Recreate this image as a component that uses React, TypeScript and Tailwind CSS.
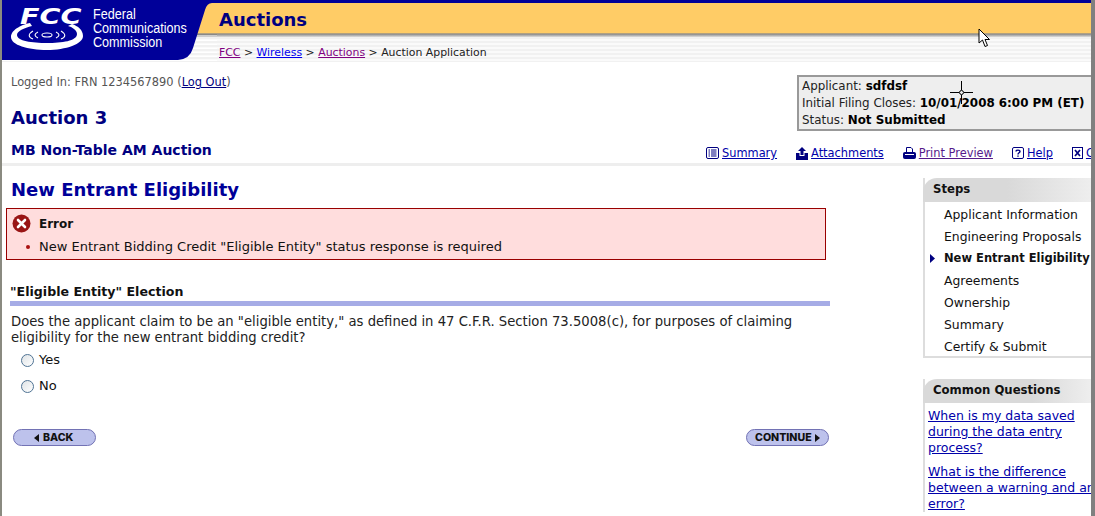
import React from 'react';

const verdana = { fontFamily: '"DejaVu Sans", Verdana, sans-serif' };

const stripes =
  'bg-[repeating-linear-gradient(180deg,#f1f1f1_0px,#f1f1f1_2px,#fafafa_2px,#fafafa_4px)]';

const steps = [
  'Applicant Information',
  'Engineering Proposals',
  'New Entrant Eligibility',
  'Agreements',
  'Ownership',
  'Summary',
  'Certify & Submit',
];

const SummaryIcon = () => (
  <svg width="13" height="12" viewBox="0 0 13 12" fill="none" stroke="#000080">
    <rect x="0.5" y="0.5" width="12" height="11" rx="1.5" />
    <path d="M2.5 3H4M5 3H10.5M2.5 5H4M5 5H10.5M2.5 7H4M5 7H10.5M2.5 9H4M5 9H10.5" />
  </svg>
);

const AttachIcon = () => (
  <svg width="12" height="13" viewBox="0 0 12 13" fill="#000080">
    <path d="M6 0L10 4H7.5V8H4.5V4H2Z" />
    <path d="M0 6H3.5V9H8.5V6H12V13H0Z" />
  </svg>
);

const PrintIcon = () => (
  <svg width="13" height="12" viewBox="0 0 13 12" fill="none" stroke="#000080">
    <path d="M3.5 6V0.5H8L9.5 2V6" />
    <rect x="0.5" y="5.5" width="12" height="6" rx="1" fill="#000080" />
    <path d="M2 7.5H11" stroke="#ffffff" />
  </svg>
);

const HelpIcon = () => (
  <svg width="12" height="12" viewBox="0 0 12 12" fill="none" stroke="#000080">
    <rect x="0.5" y="0.5" width="11" height="11" rx="1.5" />
    <path d="M4 4.5C4 2.6 8 2.6 8 4.5C8 5.8 6 5.8 6 7.4M6 8.5V9.8" strokeWidth="1.4" />
  </svg>
);

const CloseIcon = () => (
  <svg width="11" height="12" viewBox="0 0 11 12" fill="none" stroke="#000080">
    <rect x="0.5" y="0.5" width="10" height="11" />
    <path d="M3 3L8 9M8 3L3 9" strokeWidth="1.7" />
  </svg>
);

const Tool = ({ icon, label, visited }: { icon: React.ReactNode; label: string; visited?: boolean }) => (
  <span className="flex items-center gap-[3px] shrink-0">
    {icon}
    <a className={`underline ${visited ? 'text-[#551a8b]' : 'text-[#0000aa]'}`}>{label}</a>
  </span>
);

const Radio = ({ label }: { label: string }) => (
  <label className="flex items-center gap-[5px] h-[14px] text-[13px] text-[#111]">
    <input
      type="radio"
      name="eligible"
      className="appearance-none w-[13px] h-[13px] rounded-full border border-[#4f7394] bg-[linear-gradient(135deg,#dfe3e6,#ffffff)]"
    />
    {label}
  </label>
);

const PillButton = ({ children, className }: { children: React.ReactNode; className: string }) => (
  <button
    className={`h-[17px] w-[83px] flex items-center rounded-full border border-[#7272b4] bg-[#bdc2ec] text-[10.6px] font-extrabold text-[#111] ${className}`}
    style={{ fontFamily: 'Inter, sans-serif' }}
  >
    {children}
  </button>
);

function Logo() {
  return (
    <div className="relative w-[215px] h-[62px] shrink-0">
      <svg width="215" height="62" viewBox="0 0 215 62" className="absolute inset-0">
        <defs>
          <pattern id="rows" width="4" height="4" patternUnits="userSpaceOnUse">
            <rect width="4" height="2" y="1" fill="#f1f1f1" />
            <rect width="4" height="2" y="3" fill="#fafafa" />
          </pattern>
        </defs>
        <rect y="3" width="215" height="31" fill="#ffcc66" />
        <rect y="33" width="215" height="1" fill="#b0a080" />
        <rect y="34" width="215" height="1" fill="#888888" />
        <rect y="35" width="215" height="2" fill="#cccccc" />
        <rect y="37" width="215" height="25" fill="url(#rows)" />
        <path d="M0 0H215V3H210Q205 3 203 10L191 48Q188 59 176 60L0 60Z" fill="#000099" />
        <path
          d="M9 37C9 29 22 24 28 23L30 26C22 28 15 31 15 35C15 41 30 43 45 43C60 43 75 41 75 34C75 30 70 27 66 26L70 24C76 26 81 30 81 36C81 44 64 50 45 50C26 50 9 45 9 37Z"
          fill="#ffffff"
        />
        <g fill="none" stroke="#ffffff">
          <ellipse cx="45" cy="35" rx="5" ry="2" strokeWidth="1.1" />
          <path d="M36 32C32 34 32 36 36 38M54 32C58 34 58 36 54 38" strokeWidth="1.1" />
          <path d="M31 31C26 34 26 37 31 39M59 31C64 34 64 37 59 39" strokeWidth="1.1" />
        </g>
      </svg>
      <span
        className="absolute left-[18px] top-[5px] text-[22px] font-bold italic text-white leading-[24px] origin-left scale-x-[1.3]"
        style={verdana}
      >
        FCC
      </span>
      <div
        className="absolute left-[91px] top-[7px] text-[14px] leading-[14px] text-white origin-left scale-x-[0.9] whitespace-nowrap"
        style={{ fontFamily: '"Liberation Sans", sans-serif' }}
      >
        <div className="h-[14px] overflow-visible">Federal</div>
        <div className="h-[14px] overflow-visible">Communications</div>
        <div className="h-[14px] overflow-visible">Commission</div>
      </div>
    </div>
  );
}

function Header() {
  return (
    <div className="flex h-[62px] shrink-0">
      <Logo />
      <div className="flex-1 min-w-0">
        <div className="h-[3px] bg-[#000099]" />
        <div className="h-[31px] bg-[#ffcc66] pl-[2px] pt-[3px] flex items-center text-[18px] font-bold text-[#000080] border-b border-[#b0a080]">
          Auctions
        </div>
        <div className="h-[3px] bg-[linear-gradient(180deg,#888,#ddd)]" />
        <div className={`h-[25px] pl-[2px] pt-[8px] text-[10.9px] text-[#222] ${stripes}`}>
          <a className="underline text-[#800080]">FCC</a> &gt; <a className="underline text-[#0000ee]">Wireless</a> &gt;{' '}
          <a className="underline text-[#800080]">Auctions</a> &gt; Auction Application
        </div>
      </div>
    </div>
  );
}

function Sidebar() {
  return (
    <div className="w-[168px] shrink-0 pt-[12px] text-[12.4px] text-[#111]">
      <div className="border-l-2 border-b-2 border-[#dddddd] h-[180px]">
        <div className="h-[24px] -ml-[2px] rounded-tl-[14px] pl-[10px] flex items-center text-[11.7px] font-bold bg-[linear-gradient(90deg,#d9d9d9_0%,#d9d9d9_50%,#eeeeee_100%)]">
          Steps
        </div>
        <ul className="pt-[2px]">
          {steps.map((s, i) => (
            <li
              key={s}
              className={`relative h-[22px] pl-[19px] flex items-center whitespace-nowrap ${i === 2 ? 'font-bold text-[11.5px]' : ''}`}
            >
              {i === 2 && (
                <svg width="5" height="9" viewBox="0 0 5 9" className="absolute left-[5px] top-[6px]">
                  <path d="M0 0L5 4.5L0 9Z" fill="#000080" />
                </svg>
              )}
              {s}
            </li>
          ))}
        </ul>
      </div>
      <div className="mt-[21px] border-l-2 border-[#dddddd]">
        <div className="h-[24px] -ml-[2px] rounded-tl-[14px] pl-[10px] flex items-center text-[11.7px] font-bold bg-[linear-gradient(90deg,#d9d9d9_0%,#d9d9d9_65%,#eeeeee_100%)]">
          Common Questions
        </div>
        <div className="pl-[3px] pt-[5px] text-[12.5px] leading-[16px]">
          <a className="block underline text-[#0000aa]">
            When is my data saved
            <br />
            during the data entry
            <br />
            process?
          </a>
          <a className="block underline text-[#0000aa] mt-[8px] whitespace-nowrap">
            What is the difference
            <br />
            between a warning and an
            <br />
            error?
          </a>
        </div>
      </div>
    </div>
  );
}

export default function App() {
  return (
    <div
      className="relative w-[1095px] h-[516px] overflow-hidden bg-white border-l-2 border-l-[#8a8a80] border-r-4 border-r-[#808080] flex flex-col"
      style={verdana}
    >
      <Header />

      <div className="flex justify-between shrink-0 h-[68px]">
        <div className="pl-[9px] pt-[12px]">
          <div className="text-[11.4px] text-[#555]">
            Logged In: FRN 1234567890 (<a className="underline text-[#000080]">Log Out</a>)
          </div>
          <h1 className="mt-[13px] text-[18px] font-bold text-[#000080]">Auction 3</h1>
        </div>
        <div className="mt-[13px] w-[294px] h-[56px] border-2 border-r-0 border-[#999] bg-[#eeeeee] pl-[3px] pt-[1px] text-[11.9px] leading-[17px] text-[#222] whitespace-nowrap">
          <div>
            Applicant: <b className="text-black">sdfdsf</b>
          </div>
          <div>
            Initial Filing Closes: <b className="text-black">10/01/2008 6:00 PM (ET)</b>
          </div>
          <div>
            Status: <b className="text-black">Not Submitted</b>
          </div>
        </div>
      </div>

      <div className="flex items-center h-[36px] pt-[9px] shrink-0 pl-[9px] border-b-[3px] border-[#eeeeee] overflow-hidden">
        <h2 className="w-[695px] shrink-0 pb-[2px] text-[14px] font-bold text-[#000080]">MB Non-Table AM Auction</h2>
        <div className="flex gap-[19px] text-[11.4px] whitespace-nowrap pt-[5px]">
          <Tool icon={<SummaryIcon />} label="Summary" />
          <Tool icon={<AttachIcon />} label="Attachments" />
          <Tool icon={<PrintIcon />} label="Print Preview" visited />
          <Tool icon={<HelpIcon />} label="Help" />
          <Tool icon={<CloseIcon />} label="Close" />
        </div>
      </div>

      <div className="flex flex-1 min-h-0">
        <div className="w-[921px] shrink-0">
          <h2 className="pl-[9px] pt-[12px] text-[18px] leading-[24px] font-bold text-[#000099]">New Entrant Eligibility</h2>
          <div className="ml-[4px] mt-[6px] w-[820px] h-[52px] border border-[#990000] bg-[#ffdddd] text-[13px] text-[#111]">
            <div className="flex items-center h-[29px] pl-[5px] gap-[8px] text-[12px] font-bold">
              <svg width="19" height="19" viewBox="0 0 19 19">
                <circle cx="9.5" cy="9.5" r="9" fill="#991515" />
                <path d="M6 6L13 13M13 6L6 13" stroke="#ffffff" strokeWidth="2.6" strokeLinecap="round" />
              </svg>
              Error
            </div>
            <div className="flex items-center -mt-[1px] pl-[19px] gap-[9px] whitespace-nowrap">
              <span className="w-[4px] h-[4px] rounded-full bg-[#aa1111]" />
              New Entrant Bidding Credit "Eligible Entity" status response is required
            </div>
          </div>

          <h3 className="ml-[8px] mt-[24px] text-[12.6px] leading-[16px] font-bold text-[#111]">"Eligible Entity" Election</h3>
          <div className="ml-[8px] mt-[1px] w-[820px] h-[5px] bg-[#a6ace6]" />
          <p className="ml-[9px] mt-[8px] w-[815px] text-[13.2px] leading-[16px] text-[#222]">
            Does the applicant claim to be an "eligible entity," as defined in 47 C.F.R. Section 73.5008(c), for purposes of
            claiming eligibility for the new entrant bidding credit?
          </p>
          <div className="ml-[19px] mt-[7px] flex flex-col gap-[12px]">
            <Radio label="Yes" />
            <Radio label="No" />
          </div>
          <div className="ml-[11px] mt-[36px] w-[816px] flex justify-between">
            <PillButton className="pl-[20px] gap-[4px]">
              <svg width="5" height="8" viewBox="0 0 5 8">
                <path d="M5 0L0 4L5 8Z" fill="#111" />
              </svg>
              BACK
            </PillButton>
            <PillButton className="pl-[8px] gap-[3px]">
              CONTINUE
              <svg width="5" height="8" viewBox="0 0 5 8">
                <path d="M0 0L5 4L0 8Z" fill="#111" />
              </svg>
            </PillButton>
          </div>
        </div>
        <Sidebar />
      </div>

      {/* screen capture cursors */}
      <svg width="14" height="21" viewBox="0 0 14 21" className="absolute left-[976px] top-[28px]">
        <path d="M1 1V15L4.5 12L7 18.5L9.5 17.5L7 11.5H11.5Z" fill="#ffffff" stroke="#000000" />
      </svg>
      <svg width="23" height="23" viewBox="0 0 23 23" className="absolute left-[948px] top-[81px]">
        <path d="M11.5 0V9M11.5 14V23M0 11.5H9M14 11.5H23" stroke="#000000" />
        <circle cx="11.5" cy="11.5" r="2" fill="none" stroke="#000000" />
      </svg>
    </div>
  );
}
